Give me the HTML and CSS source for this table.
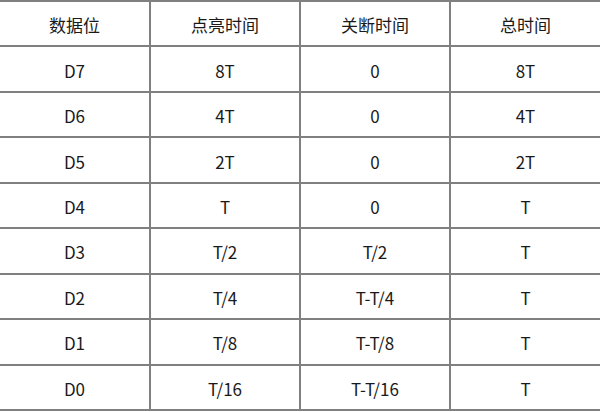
FILE: index.html
```html
<!DOCTYPE html>
<html lang="zh">
<head>
<meta charset="utf-8">
<link rel="stylesheet" href="styles.css">
</head>
<body>
<div class="table">
  <div class="cell">数据位</div><div class="cell">点亮时间</div><div class="cell">关断时间</div><div class="cell">总时间</div>
  <div class="cell">D7</div><div class="cell">8T</div><div class="cell">0</div><div class="cell">8T</div>
  <div class="cell">D6</div><div class="cell">4T</div><div class="cell">0</div><div class="cell">4T</div>
  <div class="cell">D5</div><div class="cell">2T</div><div class="cell">0</div><div class="cell">2T</div>
  <div class="cell">D4</div><div class="cell">T</div><div class="cell">0</div><div class="cell">T</div>
  <div class="cell">D3</div><div class="cell">T/2</div><div class="cell">T/2</div><div class="cell">T</div>
  <div class="cell">D2</div><div class="cell">T/4</div><div class="cell">T-T/4</div><div class="cell">T</div>
  <div class="cell">D1</div><div class="cell">T/8</div><div class="cell">T-T/8</div><div class="cell">T</div>
  <div class="cell">D0</div><div class="cell">T/16</div><div class="cell">T-T/16</div><div class="cell">T</div>
</div>
</body>
</html>
```
FILE: styles.css
```css
html, body {
  margin: 0;
  padding: 0;
  background: #ffffff;
}
.table {
  width: 600px;
  height: 411px;
  display: grid;
  grid-template-columns: 151px 150px 150px 149px;
  grid-template-rows: repeat(9, 1fr);
  border-top: 2px solid #808080;
  box-sizing: border-box;
  font-family: "Noto Sans CJK SC", "Noto Sans", sans-serif;
  font-size: 17px;
  color: #1a1a1a;
}
.cell {
  display: flex;
  align-items: center;
  justify-content: center;
  border-bottom: 2px solid #808080;
  border-right: 2px solid #808080;
  padding-top: 2px;
}
.cell:nth-child(4n) {
  border-right: none;
}
```
